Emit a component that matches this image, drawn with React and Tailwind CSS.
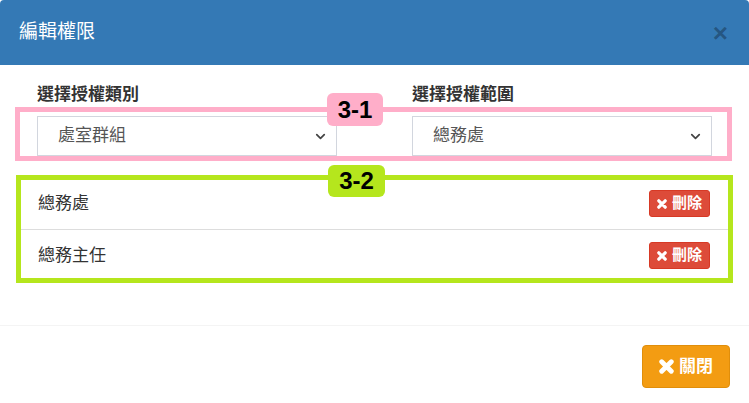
import React from "react";
import { ChevronDown } from "lucide-react";

const TimesIcon = ({ size = 10 }) => (
  <svg width={size} height={size} viewBox="0 0 10 10" className="shrink-0">
    <path d="M1.8 1.8 L8.2 8.2 M8.2 1.8 L1.8 8.2" stroke="white" strokeWidth="3.2" strokeLinecap="round" />
  </svg>
);

const FakeSelect = ({ value }) => (
  <div className="w-[300px] h-[40px] border border-[#d2d6de] bg-white flex items-center justify-between pl-[20px] pr-[8px] text-[17px] text-[#555]">
    <span>{value}</span>
    <ChevronDown size={15} strokeWidth={2.8} className="text-[#444]" />
  </div>
);

const rows = ["總務處", "總務主任"];

const App = () => {
  return (
    <div className="relative w-[749px] h-[403px] bg-white overflow-hidden font-['Liberation_Sans','Noto_Sans_CJK_TC',sans-serif] text-[#333]">
      {/* header */}
      <div className="h-[65px] bg-[#3479b5] flex items-center justify-between pl-[19px] pr-[21px] rounded-t-[4px]">
        <h4 className="text-[19px] text-white">編輯權限</h4>
        <span className="text-[26px] font-bold text-black/30 leading-none">×</span>
      </div>

      {/* body */}
      <div className="pt-[20px] h-[260px]">
        <div className="flex pl-[37px]">
          <div className="w-[375px]">
            <label className="block text-[17px] leading-[20px] font-bold mb-[11px]">選擇授權類別</label>
            <FakeSelect value="處室群組" />
          </div>
          <div className="w-[337px]">
            <label className="block text-[17px] leading-[20px] font-bold mb-[11px]">選擇授權範圍</label>
            <FakeSelect value="總務處" />
          </div>
        </div>

        <ul className="mt-[22px] mx-[21px]">
          {rows.map((item, index) => (
            <li
              key={index}
              className={`h-[51px] flex items-center justify-between pl-[17px] pr-[18px] text-[17px] ${index > 0 ? "border-t border-[#ddd] h-[52px]" : ""}`}
            >
              <span>{item}</span>
              <button className="w-[61px] h-[27px] bg-[#dd4b39] border border-[#d73925] rounded-[3px] flex items-center justify-center gap-[5px] text-white text-[15px] font-bold">
                <TimesIcon size={10} />
                刪除
              </button>
            </li>
          ))}
        </ul>
      </div>

      {/* footer */}
      <div className="border-t border-[#f4f4f4] flex justify-end pt-[19px] pr-[19px]">
        <button className="w-[88px] h-[43px] bg-[#f39c12] border border-[#e08e0b] rounded-[4px] flex items-center justify-center gap-[5px] text-white text-[17px] font-bold">
          <TimesIcon size={15} />
          關閉
        </button>
      </div>

      {/* annotation overlays */}
      <div className="absolute left-[15px] top-[107px] w-[717px] h-[54px] border-[5px] border-[#ffaec9]" />
      <div className="absolute left-[16px] top-[175px] w-[717px] h-[108px] border-[5px] border-[#b5e61d]" />
      <div className="absolute left-[327px] top-[93px] w-[56px] h-[33px] bg-[#ffaec9] rounded-[6px] flex items-center justify-center text-[24px] font-bold text-black">
        3-1
      </div>
      <div className="absolute left-[328px] top-[165px] w-[57px] h-[32px] bg-[#b5e61d] rounded-[6px] flex items-center justify-center text-[24px] font-bold text-black">
        3-2
      </div>
    </div>
  );
};

export default App;
